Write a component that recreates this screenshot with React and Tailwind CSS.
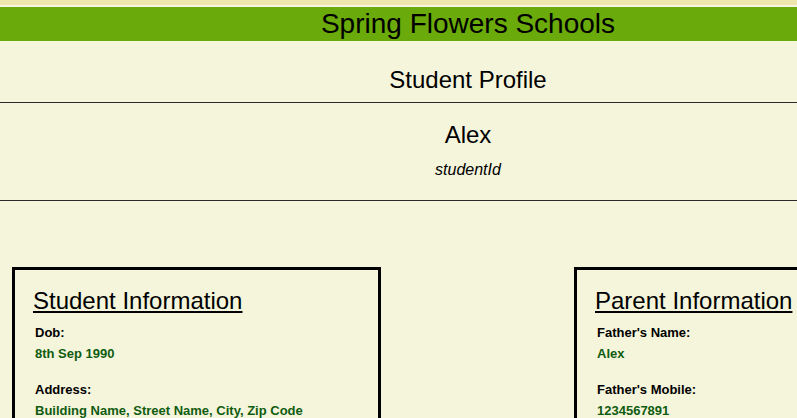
const student = {
  name: 'Alex',
  id: 'studentId',
  info: [
    { label: 'Dob:', value: '8th Sep 1990' },
    { label: 'Address:', value: 'Building Name, Street Name, City, Zip Code' },
    { label: 'Class:', value: '5th Grade' },
  ],
  parents: [
    { label: "Father's Name:", value: 'Alex' },
    { label: "Father's Mobile:", value: '1234567891' },
    { label: "Mother's Name:", value: 'Anna' },
  ],
}

const InfoBox = ({ title, rows }) => (
  <div className="w-[369px] shrink-0 border-[3px] border-black pl-[18px] pr-4 pt-[17px] pb-6">
    <h3 className="text-[24px] leading-[28px] underline">{title}</h3>
    <dl className="mt-[10px] pl-[2px] text-[13px] leading-[15px] font-bold">
      {rows.map((row, i) => (
        <div key={row.label} className={i > 0 ? 'mt-[21px]' : ''}>
          <dt className="text-black">{row.label}</dt>
          <dd className="mt-[6px] text-[#105c10]">{row.value}</dd>
        </div>
      ))}
    </dl>
  </div>
)

export default function App() {
  return (
    <div className="h-screen w-full overflow-hidden bg-[#f5f5dc] text-black font-['Liberation_Sans',Arial,sans-serif]">
      <div className="w-[936px]">
        <div className="h-[5px] bg-[#efe6ae]" />
        <div className="h-[2px] bg-[#f8f5e0]" />
        <header className="h-[34px] bg-[#6aaa0a] text-center text-[28px] leading-[34px]">
          Spring Flowers Schools
        </header>

        <div className="border-b border-[#2a2a2a] pt-[25px] pb-[8px] text-center">
          <h2 className="text-[24px] leading-[28px]">Student Profile</h2>
        </div>

        <div className="border-b border-[#2a2a2a] pt-[18px] pb-[20px] text-center">
          <h2 className="text-[24px] leading-[28px]">{student.name}</h2>
          <p className="mt-[11px] text-[16px] leading-[20px] italic">{student.id}</p>
        </div>

        <div className="mt-[66px] flex gap-[193px] pl-[12px]">
          <InfoBox title="Student Information" rows={student.info} />
          <InfoBox title="Parent Information" rows={student.parents} />
        </div>
      </div>
    </div>
  )
}
